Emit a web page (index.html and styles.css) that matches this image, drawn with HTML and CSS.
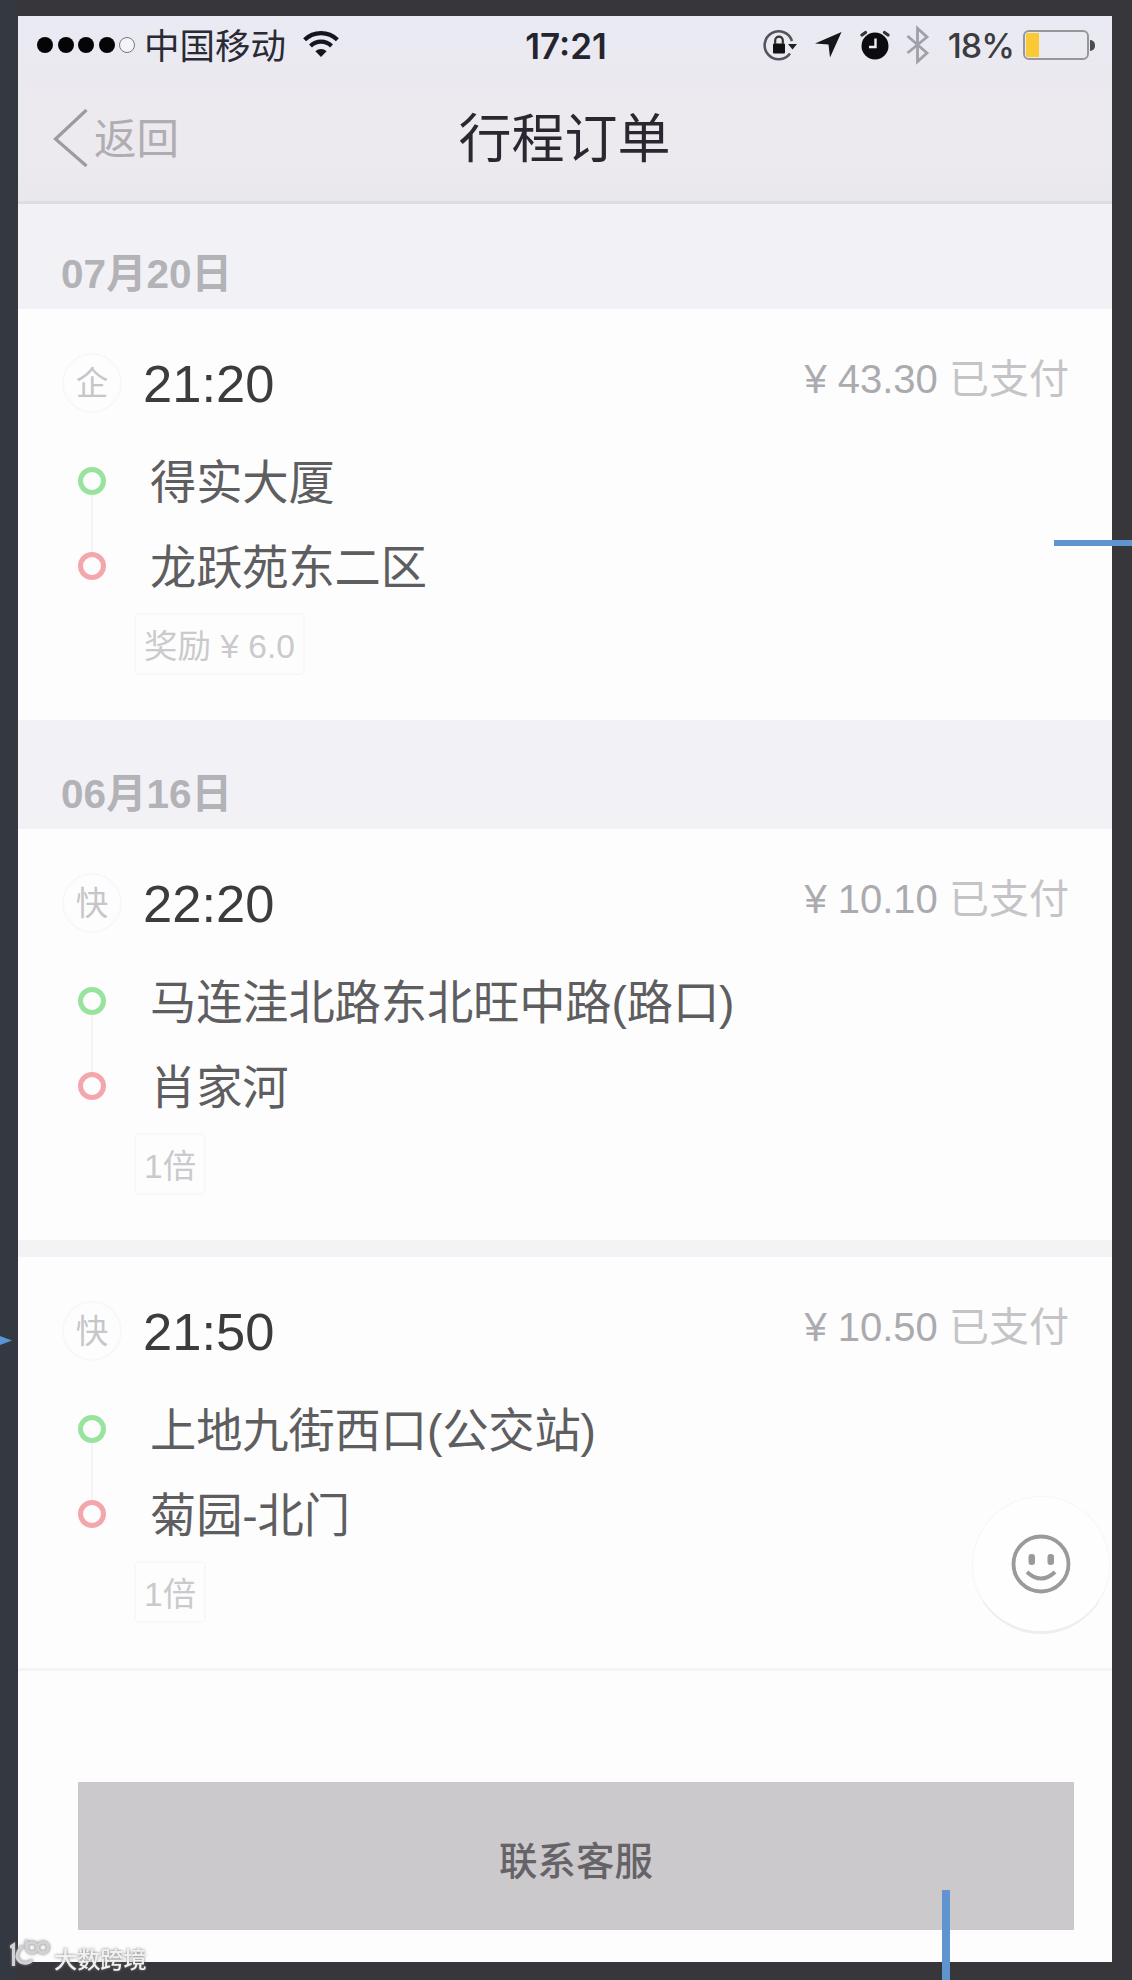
FILE: index.html
```html
<!DOCTYPE html>
<html lang="zh-CN">
<head>
<meta charset="utf-8">
<title>行程订单</title>
<link rel="stylesheet" href="styles.css">
</head>
<body>
<div class="phone">
  <header class="top">
    <div class="status">
      <div class="status-left">
        <div class="signal"><i></i><i></i><i></i><i></i><i class="empty"></i></div>
        <span class="carrier">中国移动</span>
        <svg class="wifi" width="36" height="28" viewBox="0 0 36 28"><g fill="none" stroke="#15151f" stroke-width="4.2"><path d="M1.6 9.8A23.5 23.5 0 0 1 34.4 9.8"/><path d="M7.5 15.9A15 15 0 0 1 28.5 15.9"/></g><path d="M12.4 21.2A8 8 0 0 1 23.6 21.2L18 27Z" fill="#15151f"/></svg>
      </div>
      <span class="clock">17:21</span>
      <div class="status-right">
        <svg width="34" height="32" viewBox="0 0 34 32"><path d="M29 12A14 14 0 1 0 27 24.5" fill="none" stroke="#54545c" stroke-width="2.6"/><path d="M25 15H34L29.5 20.5Z" fill="#222"/><rect x="10" y="14.500" width="12" height="10" rx="1" fill="#111"/><path d="M12.200 15V11.500a3.800 3.800 0 0 1 7.600 0V15" fill="none" stroke="#333" stroke-width="2.200"/></svg>
        <svg class="arrow" width="27" height="26" viewBox="0 0 27 26"><path d="M26.5 0L15 25.5 13.5 12.5 0 11.5Z" fill="#15151a"/></svg>
        <svg class="alarm" width="30" height="30" viewBox="0 0 30 30"><circle cx="15" cy="16" r="13.5" fill="#0c0c10"/><path d="M2 5L5.500 2.500M28 5L24.500 2.500" stroke="#33333a" stroke-width="3.200" stroke-linecap="round"/><path d="M15.5 8.5V17H9" fill="none" stroke="#eee" stroke-width="2.4"/></svg>
        <svg class="bt" width="24" height="40" viewBox="0 0 24 40"><path d="M1.5 11L21 28 11.500 36.500V3.500L21 12 1.5 28" fill="none" stroke="#a0a0a8" stroke-width="2.8"/></svg>
        <span class="percent">18%</span>
        <div class="battery"><b></b></div><i class="nub"></i>
      </div>
    </div>
    <nav class="nav">
      <a class="back"><svg width="36" height="60" viewBox="0 0 36 60"><path d="M33.5 2L2.5 31 33.5 58" fill="none" stroke="#9d9aa0" stroke-width="3.2"/></svg><span>返回</span></a>
      <h1>行程订单</h1>
    </nav>
  </header>

  <h2 class="date first">07月20日</h2>
  <article class="trip">
    <div class="head"><span class="kind">企</span><time>21:20</time><span class="price"><em>¥ 43.30</em> 已支付</span></div>
    <div class="stop from"><i></i><span>得实大厦</span></div>
    <div class="stop to"><i></i><span>龙跃苑东二区</span></div>
    <span class="tag">奖励 ¥ 6.0</span>
  </article>

  <h2 class="date">06月16日</h2>
  <article class="trip">
    <div class="head"><span class="kind">快</span><time>22:20</time><span class="price"><em>¥ 10.10</em> 已支付</span></div>
    <div class="stop from"><i></i><span>马连洼北路东北旺中路(路口)</span></div>
    <div class="stop to"><i></i><span>肖家河</span></div>
    <span class="tag">1倍</span>
  </article>
  <div class="gap"></div>
  <article class="trip last">
    <div class="head"><span class="kind">快</span><time>21:50</time><span class="price"><em>¥ 10.50</em> 已支付</span></div>
    <div class="stop from"><i></i><span>上地九街西口(公交站)</span></div>
    <div class="stop to"><i></i><span>菊园-北门</span></div>
    <span class="tag">1倍</span>
  </article>
  <button class="service">联系客服</button>

  <div class="smile"><svg width="60" height="60" viewBox="0 0 60 60"><g fill="none" stroke="#9a9a9d" stroke-width="3.8"><circle cx="30" cy="30" r="27.5"/><path d="M16 38Q30 51 44 38"/></g><g fill="#9a9a9d"><rect x="17.5" y="20" width="6.5" height="11" rx="3"/><rect x="36.5" y="20" width="6.5" height="11" rx="3"/></g></svg></div>
</div>

<i class="line line-right"></i>
<i class="line line-bottom"></i>
<i class="pointer"></i>
<div class="watermark">
  <svg width="42" height="34" viewBox="0 0 42 34"><g fill="none" stroke="#d2d2d4" stroke-width="3.2"><path d="M0 8.500L3.500 6V27"/><path d="M13 7Q7 11 7 18A8.500 8 0 0 0 22 21"/><path d="M16.500 1V9"/><circle cx="22" cy="8.5" r="5.2"/><circle cx="33" cy="8.5" r="5.2"/></g></svg>
  <span>大数跨境</span>
</div>
</body>
</html>
```
FILE: styles.css
```css
* { box-sizing: border-box; }
body {
  margin: 0;
  padding: 16px 20px 18px 18px;
  height: 1980px;
  position: relative;
  overflow: hidden;
  background: linear-gradient(90deg, #343840 0, #343840 18px, #37363b 18px);
  font-family: "Liberation Sans", "Noto Sans CJK SC", sans-serif;
}
.phone { position: relative; width: 1094px; height: 1946px; background: #fdfdfe; display: flex; flex-direction: column; }
.top { height: 188px; background: linear-gradient(#e9eaf3, #ece9ef 45%, #ece9ef 80%, #e9e8ed); border-bottom: 3px solid #dddde1; }
.status { height: 58px; display: grid; grid-template-columns: 1fr auto 1fr; align-items: center; padding: 0 17px 0 19px; }
.status-left, .status-right { display: flex; align-items: center; }
.status-right { justify-content: flex-end; }
.signal { display: flex; gap: 4.5px; }
.signal i { width: 16px; height: 16px; border-radius: 50%; background: #050508; }
.signal .empty { background: #f3f3f8; border: 1.5px solid #77777d; }
.carrier { font-size: 35.5px; line-height: 50px; margin-left: 9px; padding-top: 4px; color: #2a2a34; }
.wifi { margin-left: 17px; margin-top: -2px; }
.clock { font: 600 35px/50px Inter, sans-serif; color: #24242e; padding-top: 2px; }
.arrow { margin-left: 18px; }
.alarm { margin-left: 18px; }
.bt { margin-left: 16px; }
.percent { font: 500 34px/50px Inter, sans-serif; color: #3b3b42; margin: 0 9px 0 18px; padding-top: 2px; letter-spacing: -1px; }
.battery { width: 66px; height: 30px; border: 2px solid #96969b; border-radius: 6px; padding: 1px; display: flex; }
.battery b { width: 13px; background: #f9ca35; border-radius: 2px 0 0 2px; }
.nub { width: 5px; height: 11px; margin-left: 1px; background: #4a4a50; border-radius: 0 5px 5px 0; }
.nav { height: 127px; display: grid; grid-template-columns: 1fr auto 1fr; align-items: center; padding: 0 36px 0 35px; }
.back { display: flex; align-items: center; gap: 5px; font-size: 42.5px; line-height: 60px; color: #b0adb2; }
.back span { padding-top: 4px; }
h1 { margin: 0; padding-top: 4px; font-size: 53px; line-height: 70px; font-weight: 400; color: #2a2730; }
.date { margin: 0; height: 109px; padding: 42px 0 0 43px; background: #f1f1f6; color: #b2b2b7; font-size: 40.5px; line-height: 64px; font-weight: 700; }
.date.first { height: 105px; padding-top: 38px; }
.trip { height: 411px; padding: 42px 43px 0 44px; }
.head { display: flex; align-items: center; height: 64px; margin-bottom: 23px; }
.kind { width: 60px; height: 60px; border: 2px solid #f8f8fb; border-radius: 50%; text-align: center; font-size: 32.5px; line-height: 58px; color: #c6c6c9; }
.head time { margin-left: 21px; padding-top: 1px; font-size: 52.5px; line-height: 64px; color: #3c3c3e; }
.price { margin-left: auto; padding-bottom: 8px; font-size: 40px; line-height: 56px; color: #c4c4c7; }
.price em { font-style: normal; color: #ababaf; }
.stop { height: 85px; display: flex; align-items: center; font-size: 46.3px; color: #5e5e60; position: relative; }
.stop span { padding-bottom: 4px; letter-spacing: -0.15px; }
.stop i { width: 28px; height: 28px; margin: 0 44px 0 16px; border: 5.5px solid #98e39d; border-radius: 50%; }
.stop.to i { border-color: #f3a7ad; }
.stop.from::after { content: ""; position: absolute; left: 29px; top: 57px; width: 2px; height: 57px; background: #f4f4f7; }
.tag { display: inline-block; height: 62px; margin: 5px 0 0 72px; padding: 2px 8px 0; border: 2px solid #f8f8fb; border-radius: 5px; font-size: 33.5px; line-height: 60px; color: #cacacd; }
.gap { height: 17px; background: #f3f3f5; }
.trip.last { height: 414px; border-bottom: 3px solid #f4f4f8; }
.service { width: 996px; height: 148px; margin: 111px 0 0 60px; padding: 4px 0 0; border: 0; background: #cbc9cc; color: #656367; font: 500 38.5px/60px "Noto Sans CJK SC", sans-serif; }
.smile { position: absolute; left: 954px; top: 1480px; width: 138px; height: 138px; border-radius: 50%; background: #fefefe; border: 1px solid #f6f6f8; border-bottom: 3px solid #eeeef0; display: grid; place-items: center; }
.line { position: absolute; background: #5f94cf; }
.line-right { left: 1054px; top: 540px; width: 78px; height: 6px; }
.line-bottom { left: 942px; top: 1890px; width: 8px; height: 90px; }
.pointer { position: absolute; left: 0; top: 1336px; width: 12px; height: 9px; background: #5795d6; clip-path: polygon(0 0, 100% 50%, 0 100%); }
.watermark { position: absolute; left: 10px; top: 1939px; display: flex; gap: 2px; filter: drop-shadow(0 0 1.5px #777); color: #f1f1f2; font: 500 23.2px/32px "Noto Sans CJK SC", sans-serif; }
.watermark span { padding-top: 3px; }
```
